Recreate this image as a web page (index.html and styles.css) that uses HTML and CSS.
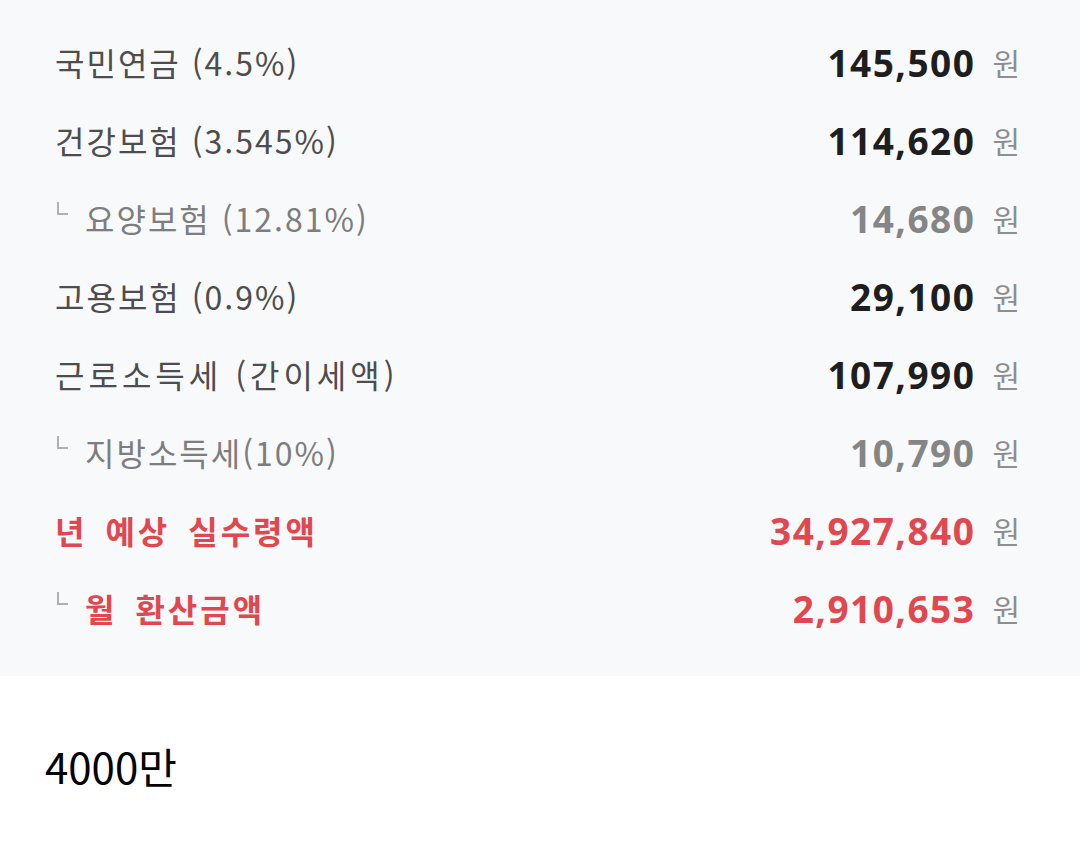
FILE: index.html
```html
<!DOCTYPE html>
<html lang="ko">
<head>
    <meta charset="UTF-8">
    <meta name="viewport" content="width=device-width, initial-scale=1.0">
    <title>실수령액</title>
    <link rel="stylesheet" href="styles.css">
</head>
<body>
    <div class="result-box">
        <div class="result-row">
            <span class="label">국민연금 (4.5%)</span>
            <span class="amount"><b>145,500</b> <i>원</i></span>
        </div>
        <div class="result-row">
            <span class="label">건강보험 (3.545%)</span>
            <span class="amount"><b>114,620</b> <i>원</i></span>
        </div>
        <div class="result-row sub">
            <span class="label"><span class="corner"></span>요양보험 (12.81%)</span>
            <span class="amount"><b>14,680</b> <i>원</i></span>
        </div>
        <div class="result-row">
            <span class="label">고용보험 (0.9%)</span>
            <span class="amount"><b>29,100</b> <i>원</i></span>
        </div>
        <div class="result-row">
            <span class="label wide">근로소득세 (간이세액)</span>
            <span class="amount"><b>107,990</b> <i>원</i></span>
        </div>
        <div class="result-row sub">
            <span class="label"><span class="corner"></span>지방소득세(10%)</span>
            <span class="amount"><b>10,790</b> <i>원</i></span>
        </div>
        <div class="result-row total">
            <span class="label">년 예상 실수령액</span>
            <span class="amount"><b>34,927,840</b> <i>원</i></span>
        </div>
        <div class="result-row total">
            <span class="label"><span class="corner"></span>월 환산금액</span>
            <span class="amount"><b>2,910,653</b> <i>원</i></span>
        </div>
    </div>

    <p class="comment">4000만</p>
</body>
</html>
```

FILE: styles.css
```css
* {
    margin: 0;
    padding: 0;
    box-sizing: border-box;
}

body {
    font-family: "Noto Sans CJK KR", "Noto Sans", sans-serif;
    background-color: #fff;
    color: #111;
}

.result-box {
    background-color: #f8f9fb;
    height: 676px;
    padding: 23px 60px 0 55px;
}

.result-row {
    display: flex;
    justify-content: space-between;
    align-items: center;
    height: 78px;
}

.result-row .label {
    display: flex;
    align-items: center;
    font-size: 32px;
    letter-spacing: 2px;
    color: #4d4d4d;
}

.result-row .label.wide {
    letter-spacing: 4px;
}

.result-row .amount {
    display: flex;
    align-items: center;
}

.result-row .amount b {
    font-family: "Open Sans", "Noto Sans", sans-serif;
    font-size: 37px;
    font-weight: 700;
    letter-spacing: 1.5px;
    color: #1e1e1e;
}

.result-row .amount i {
    font-style: normal;
    font-size: 30px;
    color: #8e8e8e;
    margin-left: 17px;
}

.corner {
    display: inline-block;
    width: 11px;
    height: 13px;
    border-left: 2px solid #b0b0b0;
    border-bottom: 2px solid #b0b0b0;
    margin: 0 17px 20px 2px;
}

.result-row.sub .label {
    color: #7d7d7d;
}

.result-row.sub .amount b {
    color: #858585;
}

.result-row.total .label {
    color: #e0474f;
    font-weight: 700;
    letter-spacing: 3px;
    word-spacing: 6px;
}

.result-row.total .amount b {
    color: #e0474f;
}

.comment {
    font-size: 42px;
    padding: 59px 0 0 45px;
    color: #000;
}
```
